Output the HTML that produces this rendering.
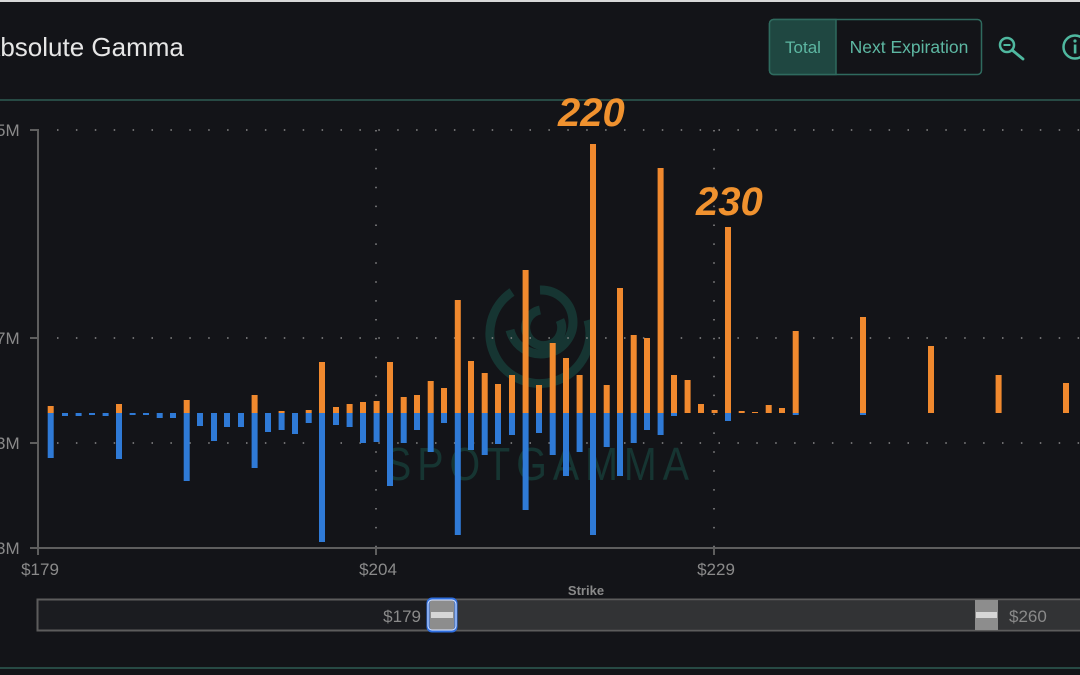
<!DOCTYPE html>
<html><head><meta charset="utf-8"><style>
html,body{margin:0;padding:0;background:#131418;width:1080px;height:675px;overflow:hidden;font-family:"Liberation Sans",sans-serif}
</style></head><body>
<svg width="1080" height="675" viewBox="0 0 1080 675" xmlns="http://www.w3.org/2000/svg" style="display:block">
<rect width="1080" height="675" fill="#131418"/>
<rect x="0" y="0" width="1080" height="2" fill="#d8d8d8"/>
<text x="-17" y="56" font-size="26" fill="#e6e6e6">Absolute Gamma</text>
<!-- toggle -->
<rect x="769.5" y="19.5" width="212" height="55" rx="4" fill="none" stroke="#2f6a5e" stroke-width="1.5"/>
<path d="M773.5 19.5 H836 V74.5 H773.5 A4 4 0 0 1 769.5 70.5 V23.5 A4 4 0 0 1 773.5 19.5Z" fill="#1f4741" stroke="#2f6a5e" stroke-width="1.5"/>
<text x="803" y="53" font-size="17" fill="#5db7a2" text-anchor="middle">Total</text>
<text x="909" y="53" font-size="17.5" fill="#5db7a2" text-anchor="middle">Next Expiration</text>
<circle cx="1007" cy="45" r="7" fill="none" stroke="#4fb89f" stroke-width="2.5"/>
<line x1="1003.5" y1="45" x2="1010.5" y2="45" stroke="#4fb89f" stroke-width="2"/>
<line x1="1012" y1="50" x2="1023" y2="59" stroke="#4fb89f" stroke-width="2.8" stroke-linecap="round"/>
<circle cx="1075" cy="47" r="11.5" fill="none" stroke="#4fb89f" stroke-width="2.5"/>
<circle cx="1075" cy="41" r="1.6" fill="#4fb89f"/>
<rect x="1073.8" y="44.5" width="2.6" height="9" fill="#4fb89f"/>
<rect x="0" y="99" width="1080" height="2" fill="#274a44"/>
<rect x="0" y="667" width="1080" height="2" fill="#274a44"/>
<!-- watermark -->
<g fill="none" stroke="#163532" stroke-width="9">
<path d="M512 292 A50 50 0 1 0 588 320"/>
<path d="M540 290 A32 32 0 1 1 510 330"/>
<path d="M560 320 A18 18 0 1 1 540 310"/>
</g>
<text x="540" y="480" font-size="46" fill="#163532" text-anchor="middle" letter-spacing="7" textLength="310" lengthAdjust="spacingAndGlyphs">SPOTGAMMA</text>
<!-- grid -->
<g stroke="#8a8a8a" stroke-width="1.5" stroke-dasharray="1.5 17.4">
<line x1="57" y1="130" x2="1080" y2="130"/>
<line x1="57" y1="338" x2="1080" y2="338"/>
<line x1="57" y1="443" x2="1080" y2="443"/>
<line x1="376" y1="130" x2="376" y2="548"/>
<line x1="714" y1="130" x2="714" y2="548"/>
</g>
<g stroke="#5e5e5e" stroke-width="2">
<line x1="38" y1="129" x2="38" y2="555"/>
<line x1="30" y1="130" x2="38" y2="130"/>
<line x1="30" y1="338" x2="38" y2="338"/>
<line x1="30" y1="443" x2="38" y2="443"/>
<line x1="30" y1="548" x2="1080" y2="548"/>
<line x1="376" y1="548" x2="376" y2="555"/>
<line x1="714" y1="548" x2="714" y2="555"/>
</g>
<g fill="#8a8a8a" font-size="17">
<text x="-4" y="136">5M</text><text x="-4" y="344">7M</text><text x="-4" y="449">3M</text><text x="-4" y="554">3M</text>
<text x="40" y="575" text-anchor="middle">$179</text>
<text x="378" y="575" text-anchor="middle">$204</text>
<text x="716" y="575" text-anchor="middle">$229</text>
</g>
<text x="586" y="595" font-size="13" font-weight="bold" fill="#8a8a8a" text-anchor="middle">Strike</text>
<!-- bars -->
<g fill="#f0892e">
<rect x="47.7" y="406" width="6" height="7"/><rect x="116" y="404" width="6" height="9"/><rect x="183.7" y="400" width="6" height="13"/><rect x="251.6" y="395" width="6" height="18"/><rect x="278.6" y="411" width="6" height="2"/><rect x="305.7" y="410" width="6" height="3"/>
<rect x="319" y="362" width="6" height="51"/><rect x="333" y="407" width="6" height="6"/><rect x="346.6" y="404" width="6" height="9"/><rect x="360" y="402" width="6" height="11"/><rect x="373.6" y="401" width="6" height="12"/><rect x="387" y="362" width="6" height="51"/><rect x="400.7" y="397" width="6" height="16"/><rect x="414" y="395" width="6" height="18"/><rect x="427.7" y="381" width="6" height="32"/><rect x="441" y="388" width="6" height="25"/>
<rect x="454.8" y="300" width="6" height="113"/><rect x="468" y="361" width="6" height="52"/><rect x="481.7" y="373" width="6" height="40"/><rect x="495" y="384" width="6" height="29"/><rect x="509" y="375" width="6" height="38"/><rect x="522.6" y="270" width="6" height="143"/><rect x="536" y="385" width="6" height="28"/><rect x="549.7" y="343" width="6" height="70"/><rect x="563" y="358" width="6" height="55"/><rect x="576.6" y="375" width="6" height="38"/>
<rect x="590" y="144" width="6" height="269"/><rect x="603.7" y="385" width="6" height="28"/><rect x="617" y="288" width="6" height="125"/><rect x="630.7" y="335" width="6" height="78"/><rect x="644" y="338" width="6" height="75"/><rect x="657.6" y="168" width="6" height="245"/><rect x="671" y="375" width="6" height="38"/><rect x="684.6" y="380" width="6" height="33"/><rect x="698" y="404" width="6" height="9"/><rect x="711.6" y="410" width="6" height="3"/>
<rect x="725" y="227" width="6" height="186"/><rect x="738.7" y="411" width="6" height="2"/><rect x="752" y="412" width="6" height="1"/><rect x="765.7" y="405" width="6" height="8"/><rect x="779" y="408" width="6" height="5"/><rect x="792.7" y="331" width="6" height="82"/><rect x="860" y="317" width="6" height="96"/><rect x="928" y="346" width="6" height="67"/><rect x="995.6" y="375" width="6" height="38"/><rect x="1063" y="383" width="6" height="30"/>
</g>
<g fill="#2f7ad6">
<rect x="47.7" y="413" width="6" height="45"/><rect x="62" y="413" width="6" height="3"/><rect x="75.6" y="413" width="6" height="3"/><rect x="89" y="413" width="6" height="2"/><rect x="102.6" y="413" width="6" height="3"/><rect x="116" y="413" width="6" height="46"/><rect x="129.6" y="413" width="6" height="2"/><rect x="143" y="413" width="6" height="2"/><rect x="156.7" y="413" width="6" height="5"/><rect x="170" y="413" width="6" height="5"/>
<rect x="183.7" y="413" width="6" height="68"/><rect x="197" y="413" width="6" height="13"/><rect x="211" y="413" width="6" height="28"/><rect x="224" y="413" width="6" height="14"/><rect x="238" y="413" width="6" height="14"/><rect x="251.6" y="413" width="6" height="55"/><rect x="265" y="413" width="6" height="19"/><rect x="278.6" y="413" width="6" height="17"/><rect x="292" y="413" width="6" height="21"/><rect x="305.7" y="413" width="6" height="10"/>
<rect x="319" y="413" width="6" height="129"/><rect x="333" y="413" width="6" height="12"/><rect x="346.6" y="413" width="6" height="14"/><rect x="360" y="413" width="6" height="30"/><rect x="373.6" y="413" width="6" height="29"/><rect x="387" y="413" width="6" height="73"/><rect x="400.7" y="413" width="6" height="30"/><rect x="414" y="413" width="6" height="17"/><rect x="427.7" y="413" width="6" height="39"/><rect x="441" y="413" width="6" height="10"/>
<rect x="454.8" y="413" width="6" height="122"/><rect x="468" y="413" width="6" height="37"/><rect x="481.7" y="413" width="6" height="42"/><rect x="495" y="413" width="6" height="31"/><rect x="509" y="413" width="6" height="22"/><rect x="522.6" y="413" width="6" height="97"/><rect x="536" y="413" width="6" height="20"/><rect x="549.7" y="413" width="6" height="42"/><rect x="563" y="413" width="6" height="63"/><rect x="576.6" y="413" width="6" height="39"/>
<rect x="590" y="413" width="6" height="122"/><rect x="603.7" y="413" width="6" height="34"/><rect x="617" y="413" width="6" height="63"/><rect x="630.7" y="413" width="6" height="30"/><rect x="644" y="413" width="6" height="17"/><rect x="657.6" y="413" width="6" height="22"/><rect x="671" y="413" width="6" height="3"/><rect x="725" y="413" width="6" height="8"/><rect x="792.7" y="413" width="6" height="2"/><rect x="860" y="413" width="6" height="2"/>
</g>
<text x="558" y="126" font-size="40" font-weight="bold" font-style="italic" fill="#f0922f">220</text>
<text x="696" y="215" font-size="40" font-weight="bold" font-style="italic" fill="#f0922f">230</text>
<!-- slider -->
<rect x="37.5" y="599.5" width="1050" height="31" fill="#1b1c20" stroke="#5c5c5c" stroke-width="2"/>
<rect x="456" y="601" width="624" height="28" fill="#323335"/>
<text x="421" y="622" font-size="17" fill="#8a8a8a" text-anchor="end">$179</text>
<text x="1009" y="622" font-size="17" fill="#8a8a8a">$260</text>
<rect x="428" y="599" width="28" height="32" rx="4" fill="#8d8d8d" stroke="#2f6fe0" stroke-width="3"/>
<rect x="428" y="600" width="28" height="30" rx="4" fill="none" stroke="#dfe8ff" stroke-width="1"/>
<rect x="431" y="612" width="22" height="6" fill="#d6d6d6"/>
<rect x="975" y="600" width="23" height="30" fill="#8d8d8d"/>
<rect x="976" y="612" width="21" height="6" fill="#d6d6d6"/>
</svg>
</body></html>
